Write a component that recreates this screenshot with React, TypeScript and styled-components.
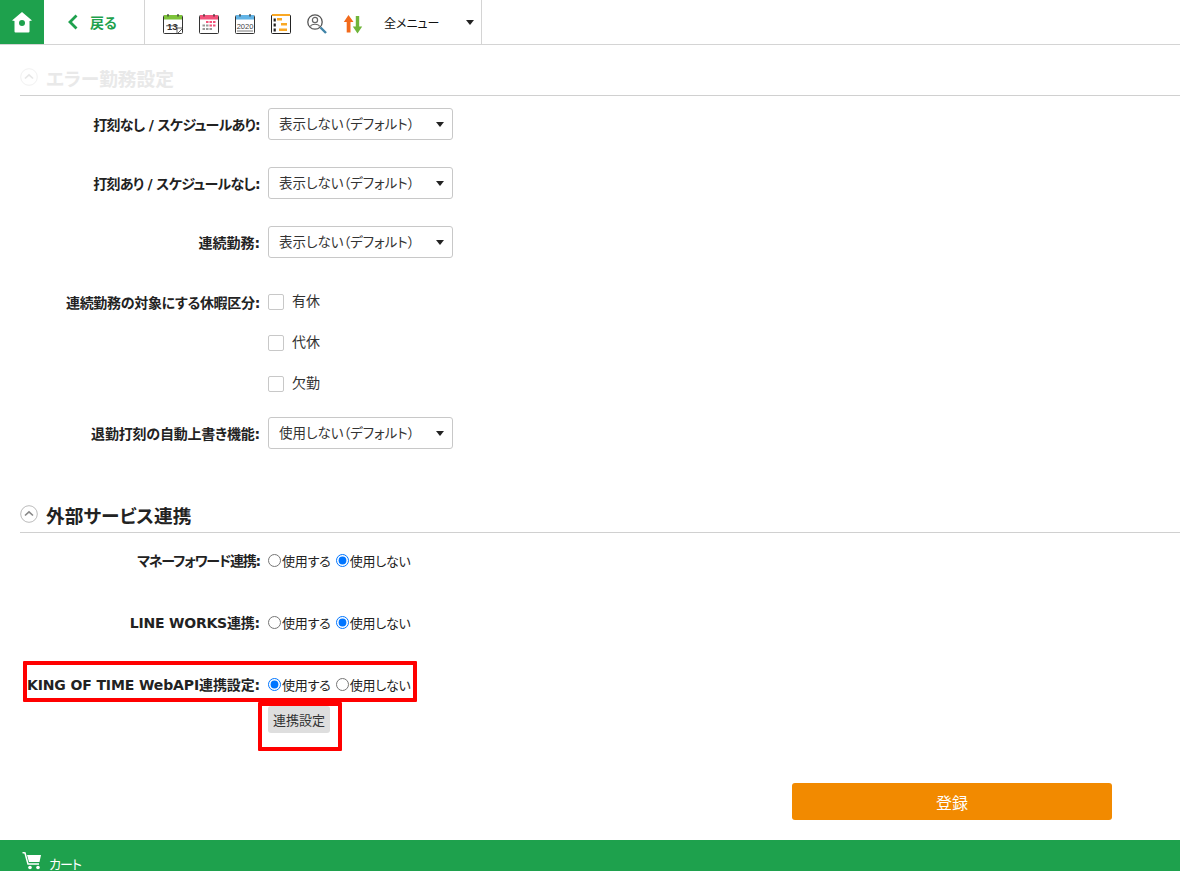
import React from "react";
import styled, { createGlobalStyle } from "styled-components";

const green = "#1ea14d";
const fontStack = `"Noto Sans CJK JP", "Liberation Sans", sans-serif`;

const Global = createGlobalStyle`
  html, body { margin: 0; padding: 0; background: #fff; }
  body { font-family: ${fontStack}; font-feature-settings: "palt"; color: #222; height: 871px; overflow: hidden; }
  * { box-sizing: border-box; }
`;

const Page = styled.div`
  position: relative;
  width: 1180px;
  height: 871px;
  overflow: hidden;
`;

const TopBar = styled.header`
  display: flex;
  height: 45px;
  border-bottom: 1px solid #d4d4d4;
`;

const HomeButton = styled.a`
  display: flex;
  width: 44px;
  align-items: center;
  justify-content: center;
  background: ${green};
`;

const BackLink = styled.a`
  display: flex;
  width: 101px;
  align-items: center;
  padding-left: 23px;
  gap: 11px;
  color: ${green};
  font-size: 14px;
  font-weight: 700;
  border-right: 1px solid #d4d4d4;
`;

const ToolGroup = styled.nav`
  display: flex;
  width: 337px;
  align-items: center;
  padding-left: 18px;
  gap: 16px;
  border-right: 1px solid #d4d4d4;
`;

const ToolIcon = styled.svg`
  width: 20px;
  height: 20px;
  flex: none;
  margin-top: 4px;
`;

const AllMenu = styled.div`
  display: flex;
  flex: 1;
  align-items: center;
  justify-content: space-between;
  margin-left: 5px;
  padding-right: 7px;
  font-size: 12px;
  color: #111;
`;

const Caret = styled.span`
  width: 0;
  height: 0;
  border-left: 4px solid transparent;
  border-right: 4px solid transparent;
  border-top: 5px solid #222;
`;

const SectionHead = styled.h2<{ $faded?: boolean; $top: number }>`
  display: flex;
  height: 34px;
  align-items: center;
  gap: 8px;
  margin: ${(p) => p.$top}px 0 0 20px;
  padding-bottom: 3px;
  border-bottom: 1px solid #d0d0d0;
  font-size: 18.7px;
  font-weight: 700;
  color: ${(p) => (p.$faded ? "#e9e9e9" : "#222")};
`;

const Chevron = styled.svg<{ $faded?: boolean }>`
  width: 18px;
  height: 18px;
  flex: none;
  opacity: ${(p) => (p.$faded ? 0.2 : 1)};
`;

const Row = styled.div<{ $top: number; $height: number }>`
  display: grid;
  grid-template-columns: 240px auto;
  column-gap: 8px;
  align-items: center;
  height: ${(p) => p.$height}px;
  margin: ${(p) => p.$top}px 0 0 20px;
`;

const Label = styled.label<{ $track?: number }>`
  text-align: right;
  white-space: nowrap;
  font-family: "DejaVu Sans", "Noto Sans CJK JP", sans-serif;
  font-size: 14px;
  font-weight: 700;
  color: #222;
  letter-spacing: ${(p) => p.$track ?? 0}px;
`;

const SelectBox = styled.div`
  position: relative;
  width: 185px;
  height: 32px;
  &::after {
    content: "";
    position: absolute;
    right: 9px;
    top: 14px;
    border-left: 4px solid transparent;
    border-right: 4px solid transparent;
    border-top: 5px solid #222;
  }
`;

const Select = styled.select`
  appearance: none;
  width: 100%;
  height: 100%;
  padding: 0 0 2px 10px;
  border: 1px solid #c8c8c8;
  border-radius: 3px;
  background: #fff;
  color: #333;
  font-family: inherit;
  font-feature-settings: inherit;
  font-size: 13.5px;
`;

const CheckLabel = styled.span`
  display: flex;
  align-items: center;
  gap: 8px;
  font-size: 14px;
  color: #333;
`;

const CheckText = styled.span`
  margin-bottom: 3px;
`;

const Check = styled.input`
  appearance: none;
  width: 16px;
  height: 16px;
  margin: 0;
  border: 1px solid #c8c8c8;
  border-radius: 2px;
  background: #fff;
`;

const RadioGroup = styled.div`
  display: flex;
  align-items: center;
  font-size: 13px;
  letter-spacing: -0.2px;
  color: #222;
`;

const RadioLabel = styled.label`
  display: flex;
  align-items: center;
  margin-right: 5px;
  white-space: nowrap;
`;

const Radio = styled.input`
  width: 13px;
  height: 13px;
  margin: 0 1px 0 0;
`;

const SettingsButton = styled.button`
  display: block;
  width: 62px;
  height: 27px;
  margin: 12px 0 0 268px;
  padding: 0;
  border: 0;
  border-radius: 3px;
  background: #dedede;
  color: #333;
  font-family: inherit;
  font-feature-settings: inherit;
  font-size: 13px;
`;

const SubmitRow = styled.div`
  display: flex;
  justify-content: flex-end;
  margin-top: 50px;
  padding-right: 68px;
`;

const SubmitButton = styled.button`
  width: 320px;
  height: 37px;
  border: 0;
  border-radius: 3px;
  background: #f28a00;
  color: #fff;
  font-family: inherit;
  font-feature-settings: inherit;
  font-size: 16px;
  font-weight: 400;
`;

const Footer = styled.footer`
  display: flex;
  align-items: flex-start;
  gap: 7px;
  height: 31px;
  margin-top: 20px;
  padding: 12px 0 0 22px;
  background: ${green};
  color: #fff;
  font-size: 13px;
  line-height: 18px;
`;

const FooterText = styled.span`
  margin-top: 3px;
  letter-spacing: -1px;
`;

const RedBox = styled.div<{ $x: number; $y: number; $w: number; $h: number }>`
  position: absolute;
  left: ${(p) => p.$x}px;
  top: ${(p) => p.$y}px;
  width: ${(p) => p.$w}px;
  height: ${(p) => p.$h}px;
  border: 4px solid #ff0000;
  border-radius: 1px;
  pointer-events: none;
`;

const Frame = ({ color }: { color: string }) => (
  <>
    <rect x=".5" y="1.500" width="19" height="18" rx="1" fill="#fff" stroke="#333" strokeWidth="1" />
    <rect x="1" y="1" width="18" height="4.500" fill={color} />
    <path d="M5 0v2.500M15 0v2.500" stroke="#333" strokeWidth="1.200" />
  </>
);

const icons = [
  <ToolIcon viewBox="0 0 20 20" key="a">
    <Frame color="#7dc33a" />
    <text x="4" y="15.800" fontSize="9.500" fontWeight="700" fontFamily="Liberation Sans" fill="#333">13</text>
    <path d="M3 11.800h12" stroke="#333" strokeWidth=".7" />
    <path d="M14 20l6-6h-6z" fill="#fff" stroke="#333" strokeWidth=".8" />
  </ToolIcon>,
  <ToolIcon viewBox="0 0 20 20" key="b">
    <Frame color="#f2527a" />
    <g fill="#f2527a">
      <rect x="7" y="7" width="2.500" height="2" /><rect x="10.500" y="7" width="2.500" height="2" /><rect x="14" y="7" width="2.500" height="2" />
      <rect x="10.500" y="10.500" width="2.500" height="2" /><rect x="14" y="10.500" width="2.500" height="2" />
    </g>
    <g fill="#999">
      <rect x="3.500" y="10.500" width="2.500" height="2" /><rect x="7" y="10.500" width="2.500" height="2" />
      <rect x="3.500" y="14" width="2.500" height="2" /><rect x="7" y="14" width="2.500" height="2" /><rect x="10.500" y="14" width="2.500" height="2" />
    </g>
  </ToolIcon>,
  <ToolIcon viewBox="0 0 20 20" key="c">
    <Frame color="#62b4e6" />
    <text x="10" y="14.800" textAnchor="middle" fontSize="7.500" fontFamily="Liberation Sans" fill="#444">2020</text>
    <path d="M2 17h16" stroke="#555" strokeWidth=".8" />
  </ToolIcon>,
  <ToolIcon viewBox="0 0 20 20" key="d">
    <rect x=".5" y="1" width="19" height="18.500" rx="1" fill="#fff" stroke="#222" />
    <rect x="1" y="0" width="18" height="2" fill="#f9a825" />
    <path d="M3.700 4.500v3M3.700 9.500v3M3.700 14.500v3" stroke="#222" strokeWidth="2.200" />
    <rect x="6" y="4" width="5" height="2.500" fill="#f9a825" />
    <rect x="10" y="9" width="6" height="2.500" fill="#f9a825" />
    <rect x="8" y="14.500" width="8" height="2.500" fill="#f9a825" />
  </ToolIcon>,
  <ToolIcon viewBox="0 0 20 20" key="e">
    <circle cx="8" cy="8" r="7.200" fill="#fff" stroke="#555" strokeWidth="1.300" />
    <circle cx="8" cy="6" r="2.600" fill="none" stroke="#666" strokeWidth="1.200" />
    <path d="M3.500 12.500c.8-3 8.200-3 9 0" fill="none" stroke="#666" strokeWidth="1.200" />
    <path d="M13.500 13.500l5.500 5.500" stroke="#3f83a8" strokeWidth="2.400" />
  </ToolIcon>,
  <ToolIcon viewBox="0 0 20 20" key="f">
    <path d="M5.500 1L10.500 8H7.500V18.500H3.700V8H.8z" fill="#f26a1b" />
    <path d="M14.500 19.500L9.800 12.500h3V2h3.400v10.500h3z" fill="#6fb53a" />
  </ToolIcon>,
];

const ChevronIcon = ({ faded }: { faded?: boolean }) => (
  <Chevron viewBox="0 0 18 18" $faded={faded}>
    <circle cx="9" cy="9" r="8.300" fill="#fff" stroke="#bbb" />
    <path d="M5 10.500L9 6.800l4 3.700" fill="none" stroke="#888" strokeWidth="1.600" />
  </Chevron>
);

const SelectRow = ({ label, value, top, track }: { label: string; value: string; top: number; track?: number }) => (
  <Row $top={top} $height={32}>
    <Label $track={track}>{label}</Label>
    <SelectBox>
      <Select defaultValue={value}>
        <option>{value}</option>
      </Select>
    </SelectBox>
  </Row>
);

const CheckRow = ({ label, text, top }: { label?: string; text: string; top: number }) => (
  <Row $top={top} $height={41}>
    <Label $track={-0.3}>{label}</Label>
    <CheckLabel>
      <Check type="checkbox" />
      <CheckText>{text}</CheckText>
    </CheckLabel>
  </Row>
);

const RadioRow = ({ label, name, on, top, track }: { label: string; name: string; on: boolean; top: number; track?: number }) => (
  <Row $top={top} $height={20}>
    <Label $track={track}>{label}</Label>
    <RadioGroup>
      <RadioLabel>
        <Radio type="radio" name={name} defaultChecked={on} />
        使用する
      </RadioLabel>
      <RadioLabel>
        <Radio type="radio" name={name} defaultChecked={!on} />
        使用しない
      </RadioLabel>
    </RadioGroup>
  </Row>
);

export default function App() {
  return (
    <Page>
      <Global />
      <TopBar>
        <HomeButton>
          <svg width="22" height="22" viewBox="0 0 22 22">
            <path d="M11 1L21 9.500 18.500 10V20.500a1 1 0 0 1-1 1H4.500a1 1 0 0 1-1-1V10L1 9.500z" fill="#fff" />
            <circle cx="11" cy="12" r="3" fill={green} />
          </svg>
        </HomeButton>
        <BackLink>
          <svg width="12" height="16" viewBox="0 0 12 16">
            <path d="M9.500 1.500L3 8l6.500 6.500" fill="none" stroke={green} strokeWidth="2.800" />
          </svg>
          戻る
        </BackLink>
        <ToolGroup>
          {icons}
          <AllMenu>
            全メニュー
            <Caret />
          </AllMenu>
        </ToolGroup>
      </TopBar>

      <SectionHead $faded $top={17}>
        <ChevronIcon faded />
        エラー勤務設定
      </SectionHead>
      <SelectRow label="打刻なし / スケジュールあり:" value="表示しない（デフォルト）" top={12} track={-0.68} />
      <SelectRow label="打刻あり / スケジュールなし:" value="表示しない（デフォルト）" top={27} track={-0.68} />
      <SelectRow label="連続勤務:" value="表示しない（デフォルト）" top={27} />
      <CheckRow label="連続勤務の対象にする休暇区分:" text="有休" top={23} />
      <CheckRow text="代休" top={0} />
      <CheckRow text="欠勤" top={0} />
      <SelectRow label="退勤打刻の自動上書き機能:" value="使用しない（デフォルト）" top={13} track={-0.2} />

      <SectionHead $top={50}>
        <ChevronIcon />
        外部サービス連携
      </SectionHead>
      <RadioRow label="マネーフォワード連携:" name="mf" on={false} top={17} track={-1.2} />
      <RadioRow label="LINE WORKS連携:" name="lw" on={false} top={42} track={-0.2} />
      <RadioRow label="KING OF TIME WebAPI連携設定:" name="kot" on top={42} track={-0.12} />
      <SettingsButton>連携設定</SettingsButton>

      <SubmitRow>
        <SubmitButton>登録</SubmitButton>
      </SubmitRow>

      <Footer>
        <svg width="20" height="18" viewBox="0 0 20 18">
          <path d="M0.500 0.500L3 1l3 11h11" fill="none" stroke="#fff" strokeWidth="1.500" />
          <path d="M5 3h14l-1.500 7H7z" fill="#fff" />
          <circle cx="8" cy="15.500" r="1.800" fill="#fff" />
          <circle cx="16" cy="15.500" r="1.800" fill="#fff" />
        </svg>
        <FooterText>カート</FooterText>
      </Footer>

      <RedBox $x={23} $y={661} $w={394} $h={41} />
      <RedBox $x={258} $y={702} $w={84} $h={49} />
    </Page>
  );
}
